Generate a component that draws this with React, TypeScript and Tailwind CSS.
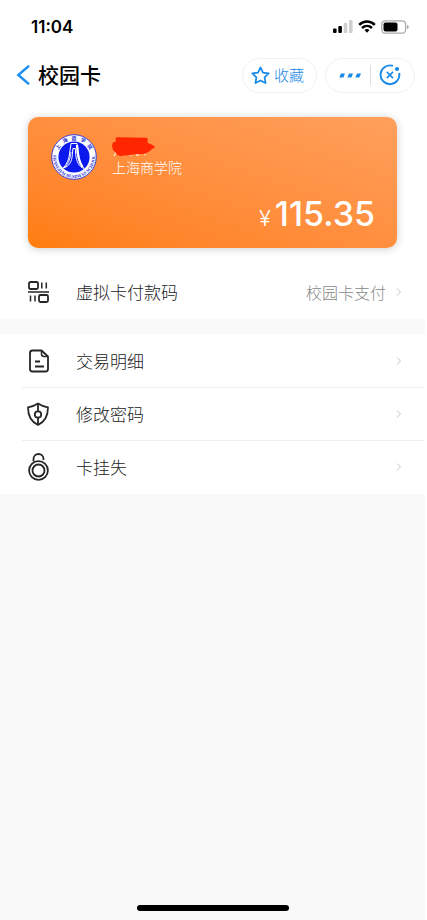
import type { ReactNode } from "react";

function StatusBar() {
  return (
    <div className="flex h-[53px] items-center justify-between pr-4 pl-[31px]">
      <span className="font-['Inter',sans-serif] text-[17px] leading-5 font-semibold">11:04</span>
      <div className="flex items-center gap-[5px]" aria-hidden="true">
        <svg width="20" height="13" viewBox="0 0 20 13">
          <rect x="0" y="8.5" width="3.6" height="4.5" rx="1" />
          <rect x="5.3" y="6" width="3.6" height="7" rx="1" />
          <rect x="10.7" y="3" width="3.6" height="10" rx="1" fill="#cfcfcf" />
          <rect x="16" y="0" width="3.6" height="13" rx="1" fill="#cfcfcf" />
        </svg>
        <svg width="18" height="13" viewBox="0 0 18 13" fill="none" stroke="#000" strokeWidth="2.5">
          <path d="M1.2 4.9C5.7.5 12.3.5 16.8 4.9" />
          <path d="M4 8C6.9 5.3 11.1 5.3 14 8" />
          <path d="M6.5 10C8 8.7 10 8.7 11.5 10L9 12.7Z" fill="#000" stroke="none" />
        </svg>
        <svg width="28" height="14" viewBox="0 0 28 14">
          <rect x=".8" y=".8" width="23.8" height="12.4" rx="3.5" fill="#fff" stroke="#aaa" strokeWidth="1.3" />
          <rect x="2.5" y="2.6" width="14" height="8.8" rx="2" />
          <path d="M26 4.8q1.8.8 1.8 2.2T26 9.2Z" fill="#aaa" />
        </svg>
      </div>
    </div>
  );
}

function Header() {
  return (
    <header className="flex h-11 items-center pr-[10px] pl-4">
      <button type="button" aria-label="返回" className="mr-2">
        <svg width="14" height="20" viewBox="0 0 14 20" fill="none" stroke="#1b8ff2" strokeWidth="2.4">
          <path d="M13 .8 2.3 10 13 19.2" />
        </svg>
      </button>
      <h1 className="flex-1 pb-[2px] text-[21px] leading-8 font-medium">校园卡</h1>
      <button
        type="button"
        className="mr-2 flex h-[35px] w-[75px] items-center justify-center gap-1 rounded-full border border-[#f1f1f1] pr-1 text-[15px] font-light text-[#1989e8]"
      >
        <svg width="19" height="19" viewBox="0 0 19 19" fill="none" stroke="currentColor" strokeWidth="1.7" strokeLinejoin="round">
          <path d="m9.5 1.4 2.5 5.2 5.7.8-4.1 4 1 5.7-5.1-2.7-5.1 2.7 1-5.7-4.1-4 5.7-.8Z" />
        </svg>
        收藏
      </button>
      <div className="flex h-[35px] w-[90px] items-center rounded-full border border-[#f1f1f1] pr-1">
        <button type="button" aria-label="更多" className="flex flex-1 justify-center pl-1">
          <svg width="22" height="5" viewBox="0 0 22 5" fill="#1989e8">
            <path d="M2 .5h4L4.4 4.5H.3ZM10 .5h4l-1.6 4h-4ZM18 .5h4l-1.7 4h-4Z" />
          </svg>
        </button>
        <span className="h-5 w-px bg-[#dedede]" />
        <button type="button" aria-label="关闭" className="flex flex-1 justify-center">
          <svg width="22" height="22" viewBox="0 0 22 22" fill="none" stroke="#1989e8" strokeWidth="1.9">
            <path d="M14 1.9A9.4 9.4 0 1 0 20.2 9" />
            <path d="m7.8 7.9 6.2 6.2m0-6.2-6.2 6.2" strokeWidth="1.6" />
            <circle cx="18" cy="5" r="2.1" fill="#1989e8" stroke="none" />
          </svg>
        </button>
      </div>
    </header>
  );
}

function SchoolBadge() {
  return (
    <svg width="46" height="46" viewBox="0 0 46 46" className="shrink-0" role="img" aria-label="上海商学院校徽">
      <defs>
        <path id="badge-top" d="M6 23a17 17 0 0 1 34 0" />
        <path id="badge-bottom" d="M2.500 19a20.900 20.900 0 1 0 41 0" />
      </defs>
      <circle cx="23" cy="23" r="22.3" fill="#fff" stroke="#3b41dc" strokeWidth="1" />
      <circle cx="23" cy="23" r="15.6" fill="#0b19ef" />
      <text fill="#2630d8" fontSize="5" fontWeight="700" xmlSpace="preserve">
        <textPath href="#badge-top" startOffset="50%" textAnchor="middle">上   海   商   学   院</textPath>
      </text>
      <text fill="#2630d8" fontSize="4.600" fontWeight="700" fontFamily="Liberation Serif">
        <textPath href="#badge-bottom" startOffset="50%" textAnchor="middle">SHANGHAI BUSINESS SCHOOL</textPath>
      </text>
      <g fill="none" stroke="#fff">
        <path d="M20 9.5h6l1.3 7c.6 7 1.8 13 5.7 18-5-1.8-7.6-7-8.3-14l-.4-6h-2.4l-.5 6c-.6 7-3 12.200-9.300 13.500 4.200-4 6-9 6.700-16Z" strokeWidth="1" />
        <path d="M26 11c.2 9 1.500 16.500 5.500 22" strokeWidth="2.200" />
        <path d="M20 18c-.8 7-2.500 12-6 15" strokeWidth=".9" />
      </g>
    </svg>
  );
}

function BalanceCard() {
  return (
    <section className="mx-7 mt-5 flex h-[131px] flex-col rounded-[10px] bg-linear-to-tr from-[#ff7d0c] to-[#ffa05c] text-white shadow-[0_1px_9px_rgba(0,0,0,0.2)]">
      <div className="flex gap-[15px] pt-[17px] pl-[23px]">
        <SchoolBadge />
        <div className="pt-[3px]">
          <svg width="44" height="20" viewBox="0 0 44 20" className="block" aria-hidden="true">
            <path d="M2 19 4 15m7 3h2m4 0h3m4 0h3m5 0 2-1" stroke="#ffe0c5" strokeWidth="1.300" />
            <path d="M3.500 1Q4 .2 6 .3L34 .8q2.500.3 1.500 3.300L36 6l3.500 1.500q3 1 3.500 3l-3 1.500-2 2-5 2.800-11 .5-4 1-10 .7q-3-.2-3.500-2.600L1 13 0 8.500 1 5.500l3-1Z" fill="#ff2600" />
          </svg>
          <p className="text-sm leading-5 font-light">上海商学院</p>
        </div>
      </div>
      <div className="mt-auto mb-[10px] flex items-baseline justify-end gap-1 pr-[22px] font-['Inter','Noto_Sans_CJK_SC',sans-serif]">
        <span className="text-[22px] leading-10 font-light">¥</span>
        <span className="text-[34px] leading-10 font-medium">115.35</span>
      </div>
    </section>
  );
}

function Row({ icon, label, note, divided }: { icon: ReactNode; label: string; note?: string; divided?: boolean }) {
  return (
    <li className="pl-[22px]">
      <button
        type="button"
        className={`flex w-full items-center border-b pr-[22px] pl-1 text-left ${note ? "h-[54px]" : "h-[53px]"} ${divided ? "border-[#efefef]" : "border-transparent"}`}
      >
        <svg width="24" height="28" viewBox="0 0 24 28" fill="none" stroke="#262626" strokeWidth="1.8" strokeLinejoin="round" className="mr-[26px]" aria-hidden="true">
          {icon}
        </svg>
        <span className="flex-1 text-[17px] leading-6 font-light text-[#222]">{label}</span>
        {note && <span className="mr-2 text-base leading-6 font-light text-[#888]">{note}</span>}
        <svg width="9" height="10" viewBox="0 0 9 10" fill="none" stroke="#c4c4c4" strokeWidth="1" aria-hidden="true">
          <path d="m3 1.500 3.500 3.500L3 8.500" />
        </svg>
      </button>
    </li>
  );
}

const codeIcon = (
  <>
    <rect x="3" y="4" width="9" height="7" rx="1.500" />
    <path d="M15.800 4.500v6m4.500-6v6M2 14h21M4.500 17.500v6m4.500-6v6" strokeWidth="1.500" />
    <rect x="13" y="17" width="9" height="7" rx="1.500" />
  </>
);
const recordIcon = (
  <>
    <path d="M6.500 3.500h9l6.500 6V22q0 2.500-2.500 2.500h-13Q4 24.500 4 22V6q0-2.500 2.500-2.500Z" />
    <path d="M15.500 3.500V7q0 2.500 2.500 2.500h4" strokeWidth="1.500" />
    <path d="M9 14.500h5M9 19.500h9" />
  </>
);
const shieldIcon = (
  <>
    <path d="M12 3.500Q7.500 6.500 2 7.300C2 16 4.500 21.500 12 25c7.500-3.500 10-9 10-17.700Q16.500 6.500 12 3.500Z" />
    <circle cx="12" cy="14.500" r="3.200" />
    <path d="M12 4v7m0 7v6.500" />
  </>
);
const lockIcon = (
  <>
    <circle cx="12.500" cy="17.500" r="9.400" />
    <circle cx="12.500" cy="17.500" r="6" />
    <path d="M7.500 8.500V6a5 5 0 0 1 10 0v1" />
  </>
);

export default function App() {
  return (
    <div className="min-h-screen bg-white pr-[2px] font-['Noto_Sans_CJK_SC',sans-serif] text-black">
      <main className="flex min-h-screen flex-col bg-[#f9f9f9]">
        <div className="bg-white">
          <StatusBar />
          <Header />
          <BalanceCard />
          <ul className="mt-[17px]">
            <Row icon={codeIcon} label="虚拟卡付款码" note="校园卡支付" />
          </ul>
        </div>
        <ul className="mt-[15px] bg-white pt-px">
          <Row icon={recordIcon} label="交易明细" divided />
          <Row icon={shieldIcon} label="修改密码" divided />
          <Row icon={lockIcon} label="卡挂失" />
        </ul>
        <div className="mx-auto mt-auto mb-[9px] h-[6px] w-[152px] rounded-full bg-black" />
      </main>
    </div>
  );
}
